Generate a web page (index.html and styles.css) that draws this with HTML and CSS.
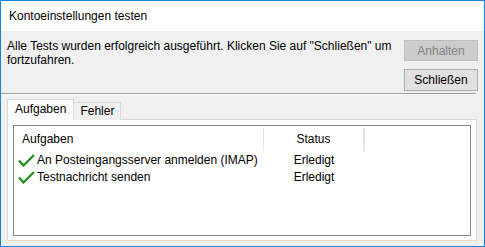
FILE: index.html
```html
<!DOCTYPE html>
<html lang="de">
<head>
  <meta charset="UTF-8" />
  <title>Kontoeinstellungen testen</title>
  <link rel="stylesheet" href="styles.css">
</head>
<body>
  <div class="window">
    <div class="titlebar">Kontoeinstellungen testen</div>
    <div class="content">
      <div class="top">
        <p class="message">Alle Tests wurden erfolgreich ausgeführt. Klicken Sie auf "Schließen" um fortzufahren.</p>
        <div class="actions">
          <button class="btn" disabled>Anhalten</button>
          <button class="btn">Schließen</button>
        </div>
      </div>
      <div class="separator"></div>

      <div class="tabs">
        <div class="tab active">Aufgaben</div>
        <div class="tab">Fehler</div>
      </div>
      <div class="panel">
        <div class="listview">
          <div class="row head">
            <div class="col task">Aufgaben</div>
            <div class="col status">Status</div>
            <div class="col rest"></div>
          </div>
          <div class="row">
            <div class="col task">
              <svg class="check" width="17" height="13" viewBox="0 0 17 13"><path d="M1 6.5 L5.5 11.5 L16 1" /></svg>
              An Posteingangsserver anmelden (IMAP)
            </div>
            <div class="col status">Erledigt</div>
          </div>
          <div class="row">
            <div class="col task">
              <svg class="check" width="17" height="13" viewBox="0 0 17 13"><path d="M1 6.5 L5.5 11.5 L16 1" /></svg>
              Testnachricht senden
            </div>
            <div class="col status">Erledigt</div>
          </div>
        </div>
      </div>
    </div>
  </div>
</body>
</html>
```

FILE: styles.css
```css
body {
  margin: 0;
  font-family: 'Liberation Sans', Arial, sans-serif;
  font-size: 12px;
  color: #000;
  background: #fff;
}
.window {
  width: 485px;
  height: 247px;
  box-sizing: border-box;
  border: 1px solid #1883d7;
  display: flex;
  flex-direction: column;
}
.titlebar {
  height: 30px;
  line-height: 30px;
  padding-left: 8px;
  background: #fff;
  flex: none;
}
.content {
  flex: 1;
  background: #f0f0f0;
  display: flex;
  flex-direction: column;
}
.top {
  display: flex;
  height: 62px;
}
.message {
  margin: 0;
  padding: 8px 0 0 6px;
  line-height: 14px;
  width: 385px;
}
.actions {
  margin-left: auto;
  margin-right: 6px;
  padding-top: 9px;
  display: flex;
  flex-direction: column;
  gap: 8px;
}
.btn {
  width: 74px;
  height: 21px;
  padding: 0;
  font-family: inherit;
  font-size: 12px;
  background: #e1e1e1;
  border: 1px solid #adadad;
  color: #000;
}
.btn:last-child {
  height: 22px;
}
.btn:disabled {
  background: #cccccc;
  border-color: #bfbfbf;
  color: #838383;
}
.separator {
  height: 1px;
  background: #a0a0a0;
  border-bottom: 1px solid #fff;
  margin-right: 8px;
}
.tabs {
  display: flex;
  align-items: flex-end;
  margin: 5px 0 0 6px;
  height: 20px;
  position: relative;
  z-index: 1;
}
.tab {
  height: 17px;
  line-height: 17px;
  padding: 0 6px;
  border: 1px solid #d9d9d9;
  border-bottom: none;
  background: #f0f0f0;
}
.tab.active {
  height: 20px;
  line-height: 19px;
  padding: 0 7px;
  background: #fff;
}
.tab + .tab {
  border-left: none;
}
.panel {
  margin: -1px 7px 0 6px;
  height: 111px;
  border: 1px solid #d9d9d9;
  background: #fff;
  padding: 5px 5px 4px 5px;
}
.listview {
  height: 100%;
  box-sizing: border-box;
  border: 1px solid #828790;
  padding-top: 2px;
}
.row {
  display: flex;
  height: 17px;
  line-height: 17px;
}
.row.head {
  height: 23px;
  line-height: 23px;
  margin-bottom: 1px;
}
.col.task {
  width: 250px;
  padding-left: 4px;
  box-sizing: border-box;
  display: flex;
  align-items: center;
  gap: 2px;
}
.head .col.task {
  padding-left: 8px;
}
.col.status {
  width: 100px;
  text-align: center;
}
.head .col {
  border-right: 1px solid #e5e5e5;
}
.head .col.status {
  width: 99px;
}
.head .col.rest {
  width: 0;
}
.check {
  flex: none;
}
.check path {
  fill: none;
  stroke: #1e8a1e;
  stroke-width: 2.2;
}
```
